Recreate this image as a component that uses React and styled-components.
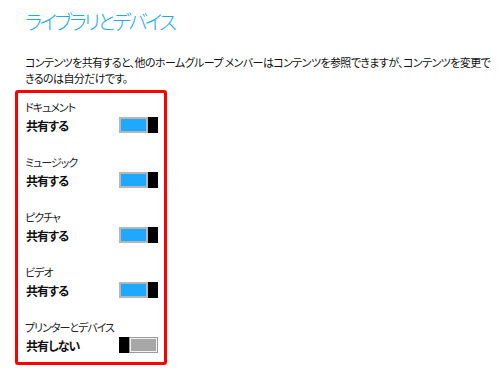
import React from 'react';
import styled, { createGlobalStyle } from 'styled-components';

const items = [
  { name: 'ドキュメント', on: true },
  { name: 'ミュージック', on: true },
  { name: 'ピクチャ', on: true },
  { name: 'ビデオ', on: true },
  { name: 'プリンターとデバイス', on: false },
];

const App = () => {
  return (
    <Page>
      <GlobalStyle />
      <Title>ライブラリとデバイス</Title>
      <Description>
        コンテンツを共有すると、他のホームグループ メンバーはコンテンツを参照できますが、コンテンツを変更で
        <br />
        きるのは自分だけです。
      </Description>
      <Panel>
        {items.map((item) => (
          <Item key={item.name}>
            <Label>{item.name}</Label>
            <Row>
              <State>{item.on ? '共有する' : '共有しない'}</State>
              <Toggle>
                {!item.on && <Thumb />}
                <Track $on={item.on} />
                {item.on && <Thumb />}
              </Toggle>
            </Row>
          </Item>
        ))}
      </Panel>
    </Page>
  );
};

export default App;

const GlobalStyle = createGlobalStyle`
  html, body {
    margin: 0;
    padding: 0;
    background: #fff;
  }
  body {
    font-family: "Noto Sans CJK JP", "Noto Sans", sans-serif;
    font-feature-settings: "palt";
  }
`;

const Page = styled.div`
  width: 500px;
  height: 374px;
  padding: 8px 0 0 25px;
  box-sizing: border-box;
  overflow: hidden;
`;

const Title = styled.h1`
  margin: 0;
  font-size: 20px;
  line-height: 28px;
  font-weight: 300;
  letter-spacing: -2.7px;
  color: #23a6ef;
`;

const Description = styled.p`
  margin: 18px 0 0;
  font-size: 11px;
  line-height: 16px;
  color: #111;
  white-space: nowrap;
  letter-spacing: -0.6px;
`;

const Panel = styled.div`
  margin: 4px 0 0 -10px;
  width: 152px;
  box-sizing: border-box;
  border: 3px solid #ff0000;
  border-radius: 3px;
  padding: 6px 6px 7px 7px;
  display: flex;
  flex-direction: column;
  gap: 19px;
`;

const Item = styled.div`
  display: flex;
  flex-direction: column;
`;

const Label = styled.div`
  font-size: 11px;
  line-height: 16px;
  letter-spacing: -1px;
  color: #222;
`;

const Row = styled.div`
  height: 20px;
  display: flex;
  align-items: center;
  justify-content: space-between;
`;

const State = styled.div`
  font-size: 12px;
  font-weight: 700;
  letter-spacing: -0.9px;
  color: #111;
  padding-left: 1px;
`;

const Toggle = styled.div`
  width: 39px;
  height: 16px;
  display: flex;
`;

const Track = styled.div`
  flex: 1;
  box-sizing: border-box;
  border: ${(p) => (p.$on ? '2px solid #b6b6b6' : '1px solid #9a9a9a')};
  background: ${(p) => (p.$on ? '#1ea8ff' : '#a7a7a7')};
  box-shadow: ${(p) => (p.$on ? 'none' : 'inset 0 0 0 1px #f2f2f2')};
`;

const Thumb = styled.div`
  width: 10px;
  background: #000;
`;
